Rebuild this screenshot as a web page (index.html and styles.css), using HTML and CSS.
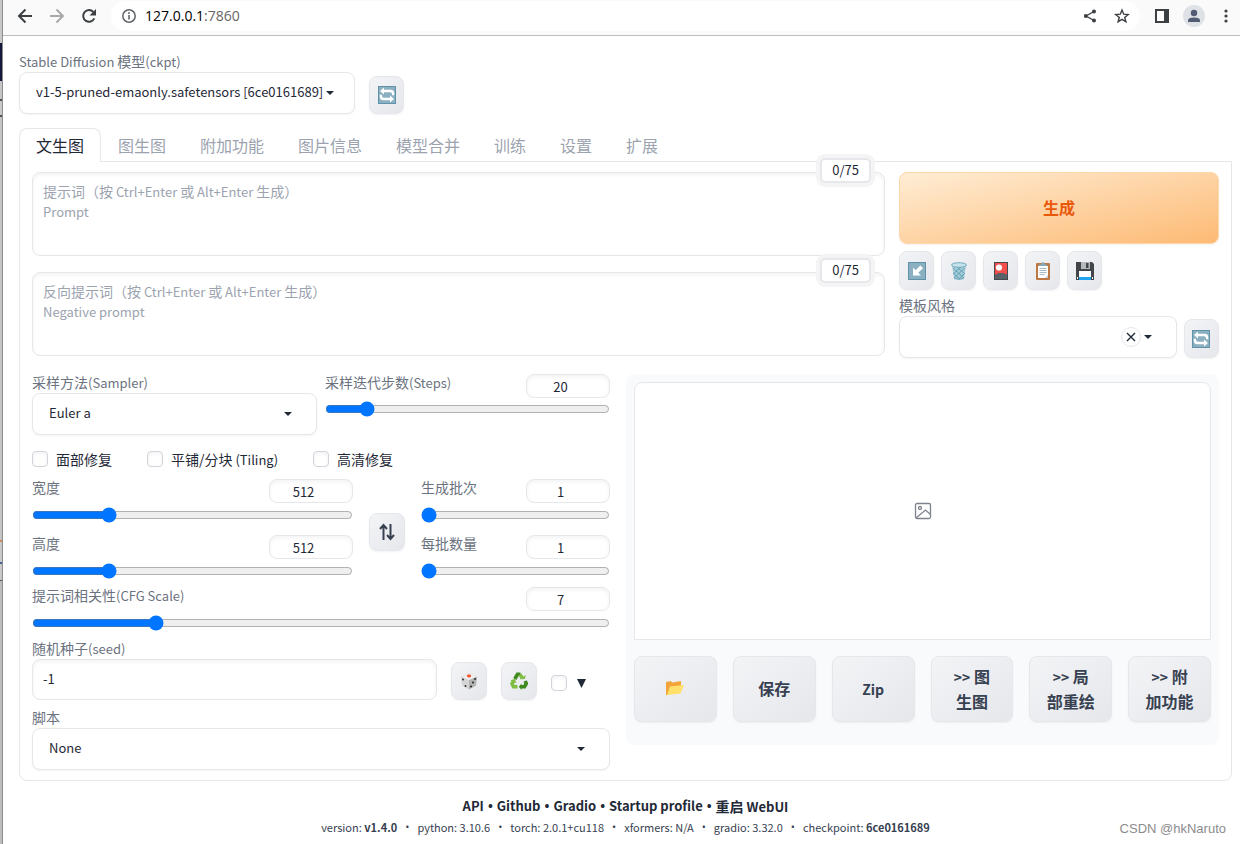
FILE: index.html
```html
<!DOCTYPE html>
<html lang="zh-CN">
<head>
<meta charset="utf-8">
<title>Stable Diffusion</title>
<link rel="stylesheet" href="styles.css">
</head>
<body>
<svg class="defs" aria-hidden="true">
  <symbol id="caret" viewBox="0 0 10 6"><path d="M1 1h8L5 5z" fill="#1f2937"/></symbol>
  <symbol id="refresh" viewBox="0 0 18 18">
    <rect width="18" height="18" fill="#5f91a8"/><rect x="1" y="1" width="16" height="16" fill="#8bb0c2"/>
    <path d="M6 1.500L2 5l4 3.500V6.300h6q2 0 2 1.700v1.200h2.300V7.500q0-3.700-3.500-3.700H6zM12 9.500v2.200H6q-2 0-2-1.700V8.800H1.700v1.700q0 3.700 3.500 3.700H12v2.300L16 13z" fill="#fff"/>
  </symbol>
</svg>
<div class="screen">
  <div class="edge"></div>
  <div class="window">
    <header class="browser">
      <nav class="nav">
        <button class="bar-btn" aria-label="Back"><svg width="16" height="16" viewBox="0 0 16 16" fill="none" stroke="#3c4043" stroke-width="2"><path d="M15 8H2M8.500 1.500L2 8l6.500 6.500"/></svg></button>
        <button class="bar-btn" aria-label="Forward"><svg width="16" height="16" viewBox="0 0 16 16" fill="none" stroke="#a7a9ab" stroke-width="2"><path d="M1 8h13M7.500 1.500L14 8l-6.500 6.500"/></svg></button>
        <button class="bar-btn" aria-label="Reload"><svg width="16" height="16" viewBox="0 0 16 16"><path d="M13.300 10.300A5.800 5.800 0 1 1 12.300 4" fill="none" stroke="#3c4043" stroke-width="2"/><path d="M15 1v6.500H8.500z" fill="#3c4043"/></svg></button>
      </nav>
      <div class="omnibox">
        <svg width="14" height="14" viewBox="0 0 14 14"><circle cx="7" cy="7" r="6.200" fill="none" stroke="#5f6368" stroke-width="1.500"/><path d="M7 6v4.500M7 3.300v1.600" stroke="#5f6368" stroke-width="1.600"/></svg>
        <span class="url">127.0.0.1<span class="port">:7860</span></span>
        <button class="bar-btn" aria-label="Share"><svg width="14" height="14" viewBox="0 0 14 14"><path d="M11 2.500L3 7l8 4.500" fill="none" stroke="#3c4043" stroke-width="1.300"/><g fill="#3c4043"><circle cx="11" cy="2.500" r="2"/><circle cx="2.800" cy="7" r="2"/><circle cx="11" cy="11.500" r="2"/></g></svg></button>
        <button class="bar-btn" aria-label="Bookmark"><svg width="16" height="16" viewBox="0 0 16 16"><path d="M8 2l1.700 4.200 4.500.3-3.500 2.900 1.200 4.400L8 11.400l-3.900 2.400 1.200-4.400L1.800 6.500l4.500-.3z" fill="none" stroke="#3c4043" stroke-width="1.400"/></svg></button>
      </div>
      <div class="actions">
        <button class="bar-btn" aria-label="Side panel"><svg width="14" height="14" viewBox="0 0 14 14"><rect x="1" y="1" width="12" height="12" fill="#fff" stroke="#3c4043" stroke-width="2"/><path d="M9 1h4v12H9z" fill="#3c4043"/></svg></button>
        <button class="bar-btn" aria-label="Profile"><svg width="22" height="22" viewBox="0 0 22 22"><circle cx="11" cy="11" r="11" fill="#dee1e6"/><circle cx="11" cy="8" r="3.200" fill="#525c73"/><path d="M5 17v-1.500q0-3 6-3t6 3V17z" fill="#525c73"/></svg></button>
        <button class="bar-btn" aria-label="Menu"><svg width="4" height="14" viewBox="0 0 4 14" fill="#3c4043"><circle cx="2" cy="2" r="1.600"/><circle cx="2" cy="7" r="1.600"/><circle cx="2" cy="12" r="1.600"/></svg></button>
      </div>
    </header>

    <main class="app">
      <div class="quick">
        <div class="field model">
          <label class="label" for="model">Stable Diffusion <span class="zh">模型</span>(ckpt)</label>
          <div class="pick"><select id="model"><option>v1-5-pruned-emaonly.safetensors [6ce0161689]</option></select><svg class="caret"><use href="#caret"/></svg></div>
        </div>
        <button class="btn tool" aria-label="刷新模型"><svg class="emoji"><use href="#refresh"/></svg></button>
      </div>

      <div class="tabs" role="tablist">
        <button class="tab active" role="tab" aria-selected="true">文生图</button>
        <button class="tab" role="tab">图生图</button>
        <button class="tab" role="tab">附加功能</button>
        <button class="tab" role="tab">图片信息</button>
        <button class="tab" role="tab">模型合并</button>
        <button class="tab" role="tab">训练</button>
        <button class="tab" role="tab">设置</button>
        <button class="tab" role="tab">扩展</button>
      </div>

      <section class="panel">
        <div class="top">
          <div class="prompts">
            <div class="prompt">
              <textarea id="prompt" placeholder=" "></textarea>
              <label class="hint" for="prompt"><span class="zh">提示词（按</span> Ctrl+Enter <span class="zh">或</span> Alt+Enter <span class="zh">生成）</span><br>Prompt</label>
              <span class="count">0/75</span>
            </div>
            <div class="prompt">
              <textarea id="negative" placeholder=" "></textarea>
              <label class="hint" for="negative"><span class="zh">反向提示词（按</span> Ctrl+Enter <span class="zh">或</span> Alt+Enter <span class="zh">生成）</span><br>Negative prompt</label>
              <span class="count">0/75</span>
            </div>
          </div>
          <div class="run">
            <button class="btn generate">生成</button>
            <div class="tools">
              <button class="btn tool" aria-label="读取参数"><svg class="emoji" viewBox="0 0 18 18"><rect width="18" height="18" fill="#5f91a8"/><rect x="1" y="1" width="16" height="16" fill="#8bb0c2"/><path d="M12.300 3.500L7.600 8.200 5 5.600V13.500h8L10.200 10.800 15 6.200z" fill="#fff"/></svg></button>
              <button class="btn tool" aria-label="清空"><svg class="emoji" viewBox="0 0 18 18"><path d="M2 3l2 14q5 2 10 0l2-14z" fill="#a5ccd9"/><path d="M3 6l11 10M3 11l7 6M7 5l8 7M15 6L4 16M15 11l-6 6M11 5l-8 7" stroke="#5f9db3" stroke-width=".9"/><ellipse cx="9" cy="3" rx="7.500" ry="2.300" fill="#c4e3ec" stroke="#74a9bb"/><path d="M4 16q5 2.500 10 0" stroke="#74a9bb" fill="none"/></svg></button>
              <button class="btn tool" aria-label="附加网络"><svg class="emoji" viewBox="0 0 18 18"><rect x="2" width="14" height="18" fill="#424a50"/><path d="M3 1h12v12q-6-4-12 0z" fill="#f44f4c"/><circle cx="7" cy="5.500" r="3.100" fill="#fff"/><path d="M3 13q6-4 12 0v4H3z" fill="#596266"/></svg></button>
              <button class="btn tool" aria-label="应用样式"><svg class="emoji" viewBox="0 0 18 18"><rect x="2" y="1" width="14" height="17" rx="1" fill="#bd7844"/><path d="M4 4h10v12H4z" fill="#fff"/><path d="M5.500 6.500h7M5.500 8.500h7M5.500 10.500h7M5.500 12.500h5" stroke="#a9b9c1"/><path d="M5 4V2.500h2.500q0-2.500 1.500-2.500t1.500 2.500H13V4z" fill="#82aec0"/><path d="M11 16l3-3v3z" fill="#c9d2d6"/></svg></button>
              <button class="btn tool" aria-label="保存样式"><svg class="emoji" viewBox="0 0 18 18"><path d="M0 0h16l2 2v16H0z" fill="#424649"/><path d="M5 0h9v7H5z" fill="#b5b9bb"/><path d="M10 1h2.500v5H10z" fill="#424649"/><path d="M3 9h12v9H3z" fill="#fff"/><path d="M3 15h12v3H3z" fill="#20a4ef"/><path d="M1 15h1v2H1zM16 15h1v2h-1z" fill="#fff"/></svg></button>
            </div>
            <div class="styles-row">
              <div class="field grow">
                <label class="label" for="style"><span class="zh">模板风格</span></label>
                <div class="pick"><select id="style"><option></option></select><button class="clear" aria-label="清除"><svg width="10" height="10" viewBox="0 0 10 10"><path d="M1 1l8 8M9 1L1 9" stroke="#1f2937" stroke-width="1.400"/></svg></button><svg class="caret"><use href="#caret"/></svg></div>
              </div>
              <button class="btn tool" aria-label="刷新风格"><svg class="emoji"><use href="#refresh"/></svg></button>
            </div>
          </div>
        </div>

        <div class="bottom">
          <div class="settings">
            <div class="pair">
              <div class="field">
                <label class="label" for="sampler"><span class="zh">采样方法</span>(Sampler)</label>
                <div class="pick"><select id="sampler"><option>Euler a</option></select><svg class="caret"><use href="#caret"/></svg></div>
              </div>
              <div class="slider">
                <div class="slider-head"><label class="label" for="steps"><span class="zh">采样迭代步数</span>(Steps)</label><input class="num" type="number" value="20" aria-label="Steps"></div>
                <input id="steps" type="range" min="1" max="150" value="20">
              </div>
            </div>
            <div class="checks">
              <label class="check"><input type="checkbox"><span class="zh">面部修复</span></label>
              <label class="check"><input type="checkbox"><span><span class="zh">平铺/分块</span> (Tiling)</span></label>
              <label class="check"><input type="checkbox"><span class="zh">高清修复</span></label>
            </div>
            <div class="size">
              <div class="stack dims">
                <div class="slider">
                  <div class="slider-head"><label class="label" for="w"><span class="zh">宽度</span></label><input class="num" type="number" value="512" aria-label="宽度"></div>
                  <input id="w" type="range" min="64" max="2048" value="512">
                </div>
                <div class="slider">
                  <div class="slider-head"><label class="label" for="h"><span class="zh">高度</span></label><input class="num" type="number" value="512" aria-label="高度"></div>
                  <input id="h" type="range" min="64" max="2048" value="512">
                </div>
              </div>
              <button class="btn tool" aria-label="交换宽高"><svg class="emoji" viewBox="0 0 18 18"><path d="M5.500 17V2.500M2 6l3.500-4L9 6M12.500 1v14.500M9 12l3.500 4L16 12" fill="none" stroke="#374151" stroke-width="2"/></svg></button>
              <div class="stack batch">
                <div class="slider">
                  <div class="slider-head"><label class="label" for="bc"><span class="zh">生成批次</span></label><input class="num" type="number" value="1" aria-label="生成批次"></div>
                  <input id="bc" type="range" min="1" max="100" value="1">
                </div>
                <div class="slider">
                  <div class="slider-head"><label class="label" for="bs"><span class="zh">每批数量</span></label><input class="num" type="number" value="1" aria-label="每批数量"></div>
                  <input id="bs" type="range" min="1" max="8" value="1">
                </div>
              </div>
            </div>
            <div class="slider cfg">
              <div class="slider-head"><label class="label" for="cfg"><span class="zh">提示词相关性</span>(CFG Scale)</label><input class="num" type="number" value="7" aria-label="CFG Scale"></div>
              <input id="cfg" type="range" min="1" max="30" step="0.5" value="7">
            </div>
            <div class="seed">
              <div class="field grow">
                <label class="label" for="seed"><span class="zh">随机种子</span>(seed)</label>
                <input id="seed" class="text" type="text" value="-1">
              </div>
              <button class="btn tool" aria-label="随机"><svg class="emoji" viewBox="0 0 18 18"><path d="M9 1l8 3.500-1 9L9 17.500 2 13.500l-1-9z" fill="#d5d5d5"/><path d="M9 8l8-3.500-1 9-7 4z" fill="#b3b3b3"/><path d="M9 1l8 3.500L9 8 1 4.500z" fill="#eee"/><ellipse cx="9" cy="4" rx="2.200" ry="1.400" fill="#f5502d"/><g fill="#333"><circle cx="3" cy="7.500" r="1"/><circle cx="5.500" cy="14" r="1"/><circle cx="15" cy="7" r="1.100"/><circle cx="13" cy="10.500" r="1.100"/><circle cx="11" cy="14.500" r="1.100"/></g></svg></button>
              <button class="btn tool" aria-label="重用"><svg class="emoji" viewBox="0 0 18 18" fill="none" stroke-width="3.600"><path d="M4.800 7L7.500 2.300h3" stroke="#3f8a1f"/><path d="M10 2.300l2.300 4" stroke="#80bd43"/><path d="M9.800 7.200l5-.2 1-4z" fill="#80bd43"/><path d="M15 9l1.300 2.500-1.800 3.200H11" stroke="#3f8a1f"/><path d="M11.500 11.500v6.500L8.800 14.700z" fill="#3f8a1f"/><path d="M7.500 14.700h-4L2 11.800l1.400-2.600" stroke="#80bd43"/><path d="M.5 8.500l4.300-1.800 1.700 4.500z" fill="#80bd43"/></svg></button>
              <label class="extra"><input type="checkbox" aria-label="更多"><svg width="9" height="9" viewBox="0 0 9 9"><path d="M0 0h9L4.500 9z" fill="#1f2937"/></svg></label>
            </div>
            <div class="field">
              <label class="label" for="script"><span class="zh">脚本</span></label>
              <div class="pick"><select id="script"><option>None</option></select><svg class="caret"><use href="#caret"/></svg></div>
            </div>
          </div>

          <div class="output">
            <div class="gallery"><svg width="18" height="18" viewBox="0 0 18 18" fill="none" stroke="#7d838d" stroke-width="1.300"><rect x="1.500" y="1.500" width="15" height="15" rx="1.500"/><circle cx="6" cy="6" r="1.500"/><path d="M2 16L11.500 8l5 4.500"/></svg></div>
            <div class="outs">
              <button class="btn out" aria-label="打开目录"><svg class="emoji" viewBox="0 0 18 18"><path d="M0 3l5-1 1 1.500 9-1.500v5L2 16H0z" fill="#f3a53c"/><path d="M4 7.500l14-1.500-3.500 8.500L1 16z" fill="#ffe06b"/></svg></button>
              <button class="btn out">保存</button>
              <button class="btn out"><span class="latin">Zip</span></button>
              <button class="btn out"><span class="latin">&gt;&gt;</span> 图<br>生图</button>
              <button class="btn out"><span class="latin">&gt;&gt;</span> 局<br>部重绘</button>
              <button class="btn out"><span class="latin">&gt;&gt;</span> 附<br>加功能</button>
            </div>
          </div>
        </div>
      </section>

      <footer class="footer">
        <div class="links"><a href="#">API</a><i>•</i><a href="#">Github</a><i>•</i><a href="#">Gradio</a><i>•</i><a href="#">Startup profile</a><i>•</i><a href="#"><span class="zh">重启</span> WebUI</a></div>
        <div class="versions"><span>version: <b>v1.4.0</b></span><i>•</i><span>python: 3.10.6</span><i>•</i><span>torch: 2.0.1+cu118</span><i>•</i><span>xformers: N/A</span><i>•</i><span>gradio: 3.32.0</span><i>•</i><span>checkpoint: <b>6ce0161689</b></span></div>
      </footer>
    </main>
  </div>
  <div class="watermark">CSDN @hkNaruto</div>
</div>
</body>
</html>
```
FILE: styles.css
```css
* { box-sizing: border-box; }
body {
  margin: 0;
  background: #fff;
  color: #1f2937;
  font: 13px/20px "Noto Sans CJK SC", sans-serif;
}
button, input, select, textarea { font: inherit; color: inherit; margin: 0; }
button { cursor: pointer; }
svg { display: block; flex: none; }
i { font-style: normal; font-family: "Open Sans", sans-serif; }
a { color: inherit; text-decoration: none; }
.defs { position: absolute; width: 0; height: 0; }
.zh { font-size: 14px; }

.screen { position: relative; display: flex; min-height: 100vh; }
.edge {
  width: 3px;
  flex: none;
  border-right: 1px solid #8d8d8d;
  background: linear-gradient(#c8c8c8 43px, #14183a 43px 81px, #c4c4c4 81px 99px, #555 99px 101px, #c8c8c8 101px 115px, #555 115px 117px, #c4c4c4 117px 540px, #d08a55 540px 542px, #c8c8c8 542px 562px, #4a6490 562px 564px, #c8c8c8 564px 580px, #555 580px 581px, #bdbdbd 581px);
}
.window { flex: 1; min-width: 0; }

.browser {
  display: flex;
  align-items: center;
  height: 36px;
  padding: 0 12px 4px 14px;
  background: #fafafa;
  border-bottom: 1px solid #bfbfbf;
}
.bar-btn { display: block; padding: 0; border: 0; background: none; }
.nav { display: flex; gap: 16px; width: 94px; }
.omnibox {
  display: flex;
  flex: 1;
  align-items: center;
  gap: 17px;
  height: 30px;
  padding: 0 10px 0 11px;
  border-radius: 15px;
  background: #fff;
}
.url { flex: 1; margin-left: -8px; color: #000; font: 14px/20px "Open Sans", sans-serif; }
.port { color: #666; }
.actions { display: flex; align-items: center; gap: 14px; margin-left: 15px; }
.actions .bar-btn:last-child { margin-left: 5px; }

.app { padding: 17px 8px 0 16px; }
.quick { display: flex; align-items: flex-end; gap: 14px; }
.model { width: 336px; }
.model .caret { right: 20px; }
.field { display: flex; flex-direction: column; min-width: 0; }
.grow { flex: 1; }
.label { display: block; height: 19px; color: #6b7280; line-height: 16px; white-space: nowrap; }
.pick { display: flex; align-items: center; position: relative; }
.pick select {
  appearance: none;
  width: 100%;
  height: 42px;
  padding: 0 16px 2px;
  border: 1px solid #e5e7eb;
  border-radius: 8px;
  background: #fff;
  box-shadow: 0 1px 2px rgba(0, 0, 0, .05);
}
.caret { position: absolute; right: 24px; width: 10px; height: 6px; }
.clear {
  position: absolute;
  right: 36px;
  display: grid;
  place-items: center;
  width: 20px;
  height: 20px;
  padding: 0;
  border: 1px solid #e5e7eb;
  border-radius: 50%;
  background: #fff;
}

.btn {
  padding: 0;
  border: 1px solid #e5e7eb;
  border-radius: 8px;
  background: linear-gradient(to bottom right, #f3f4f6, #e5e7eb);
  box-shadow: 0 1px 2px rgba(0, 0, 0, .05);
  color: #374151;
  font-size: 16px;
  font-weight: 700;
  line-height: 24px;
}
.tool { width: 35px; height: 38px; flex: none; }
.emoji { width: 18px; height: 18px; margin: 0 auto; }

.tabs { display: flex; margin-top: 14px; position: relative; z-index: 1; }
.tab {
  height: 34px;
  margin-bottom: -1px;
  padding: 0 16px 2px;
  border: 1px solid transparent;
  border-bottom: 0;
  border-radius: 8px 8px 0 0;
  background: none;
  color: #9ca3af;
  font-size: 16px;
}
.tab.active { border-color: #e5e7eb; background: #fff; color: #1f2937; }

.panel { padding: 10px 12px; border: 1px solid #e5e7eb; border-radius: 0 0 8px 8px; }
.top { display: grid; grid-template-columns: 8fr 3fr; gap: 14px; }
.prompts { display: flex; flex-direction: column; gap: 16px; }
.prompt { position: relative; display: grid; }
.prompt > textarea, .hint { grid-area: 1 / 1; }
textarea {
  width: 100%;
  height: 84px;
  padding: 10px;
  border: 1px solid #e5e7eb;
  border-radius: 8px;
  resize: none;
  box-shadow: inset 0 2px 4px rgba(0, 0, 0, .05);
}
.hint { padding: 9px 11px; color: #9ca3af; pointer-events: none; }
textarea:not(:placeholder-shown) + .hint { visibility: hidden; }
.count {
  position: absolute;
  top: -14px;
  right: 14px;
  width: 51px;
  height: 25px;
  border: 2px solid #e5e7eb;
  border-radius: 5px;
  background: #fff;
  box-shadow: 0 0 0 4px #f4f4f4;
  line-height: 20px;
  text-align: center;
}
.run { display: flex; flex-direction: column; gap: 7px; }
.generate {
  height: 72px;
  padding-bottom: 2px;
  border-color: #fed7aa;
  background: linear-gradient(to bottom right, #ffedd5, #fdba74);
  color: #ea580c;
}
.tools { display: flex; gap: 7px; }
.run .tool { height: 39px; }
.styles-row { display: flex; align-items: flex-end; gap: 7px; }

.bottom { display: grid; grid-template-columns: 578fr 593fr; gap: 16px; align-items: start; margin-top: 16px; }
.pair { display: grid; grid-template-columns: 1fr 1fr; gap: 8px; }
.slider-head { display: flex; justify-content: space-between; height: 24px; }
.num {
  width: 84px;
  height: 24px;
  padding: 0 8px;
  border: 1px solid #e5e7eb;
  border-radius: 8px;
  background: #fff;
  box-shadow: inset 0 2px 4px rgba(0, 0, 0, .05);
  text-align: center;
}
input[type="range"] { display: block; width: 100%; height: 16px; margin-top: 3px; }
.stack input[type="range"], .cfg input[type="range"] { margin-top: 4px; }
input[type="checkbox"] {
  appearance: none;
  flex: none;
  width: 16px;
  height: 16px;
  border: 1px solid #d1d5db;
  border-radius: 4px;
  background: #fff;
  box-shadow: inset 0 2px 4px rgba(0, 0, 0, .05);
}
.checks { display: flex; gap: 35px; margin-top: 13px; }
.check { display: flex; align-items: center; gap: 8px; height: 22px; line-height: 18px; }
.size { display: flex; align-items: center; gap: 16px; margin-top: 9px; }
.stack { display: flex; flex-direction: column; gap: 12px; }
.dims { flex: 321; }
.batch { flex: 189; }
.size .tool, .seed .tool { width: 36px; }
.size .tool { margin-top: 6px; }
.cfg { margin-top: 8px; }
.seed { display: flex; align-items: flex-end; gap: 14px; margin-top: 9px; }
.text {
  height: 41px;
  width: 100%;
  padding: 0 10px 2px;
  border: 1px solid #e5e7eb;
  border-radius: 8px;
  box-shadow: inset 0 2px 4px rgba(0, 0, 0, .05);
}
.extra { display: flex; align-items: center; gap: 10px; width: 59px; height: 34px; }
.seed + .field { margin-top: 9px; }

.output { padding: 8px 8px 23px; border-radius: 8px; background: #f9fafb; }
.gallery { display: grid; place-items: center; height: 258px; border: 1px solid #e5e7eb; border-radius: 8px 8px 0 0; background: #fff; }
.outs { display: grid; grid-template-columns: repeat(6, 1fr); gap: 16px; margin-top: 16px; }
.out { height: 66px; padding-bottom: 2px; }
.latin { font-size: 14px; }

.footer { margin-top: 15px; text-align: center; }
.links { display: flex; justify-content: center; gap: 4px; font-weight: 700; }
.versions { display: flex; justify-content: center; gap: 8px; color: #374151; font-size: 11px; }
.versions b { font-weight: 700; }
.watermark {
  position: absolute;
  right: 14px;
  bottom: 5px;
  color: #8c8c8c;
  font: 13px/20px "Liberation Sans", sans-serif;
}
```
